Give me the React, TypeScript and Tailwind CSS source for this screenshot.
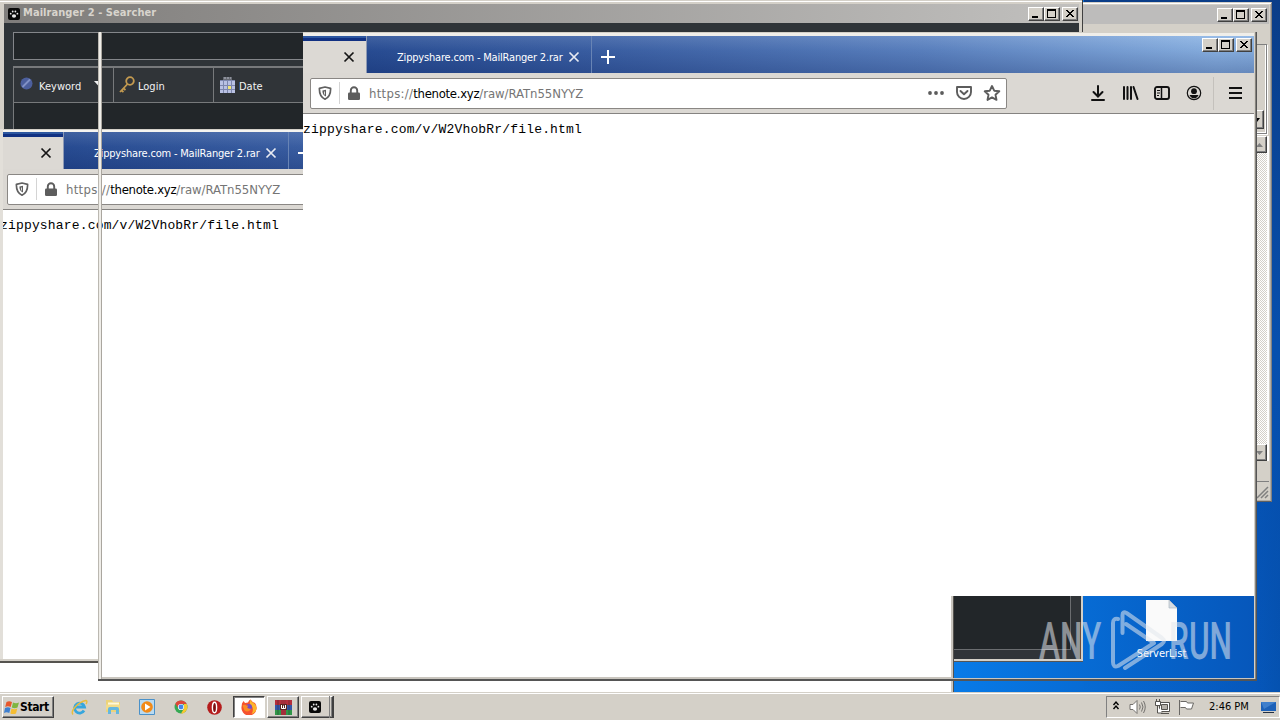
import type { ReactNode } from "react";

const ui = "font-['DejaVu_Sans_Condensed','DejaVu_Sans',sans-serif] whitespace-nowrap";

function WinButton({ kind }: { kind: "min" | "max" | "close" }) {
  return (
    <div
      className={`flex h-[14px] w-4 shrink-0 items-center justify-center border border-t-white border-l-white border-r-[#404040] border-b-[#404040] bg-[#d4d0c8] shadow-[inset_-1px_-1px_0_#808080] ${kind === "close" ? "ml-[2px]" : ""}`}
    >
      <svg width="14" height="12" viewBox="0 0 14 12" fill="none" stroke="#000" shapeRendering="crispEdges">
        {kind === "min" && <path d="M3 9h6" strokeWidth="2" />}
        {kind === "max" && <path d="M2.500 1.500h8v8h-8zM2 2.500h9" />}
        {kind === "close" && <path d="M3 2l7 7M4 2l7 7M10 2L3 9M11 2L4 9" shapeRendering="auto" />}
      </svg>
    </div>
  );
}

function WinButtons() {
  return (
    <div className="flex">
      <WinButton kind="min" />
      <WinButton kind="max" />
      <WinButton kind="close" />
    </div>
  );
}

function Paw({ className = "" }: { className?: string }) {
  return (
    <svg width="12" height="12" viewBox="0 0 12 12" className={className}>
      <rect width="12" height="12" rx="2" fill="#080808" />
      <g fill="#e8e8e8">
        <ellipse cx="6" cy="8" rx="2.100" ry="1.700" />
        <circle cx="2.700" cy="5.700" r=".9" />
        <circle cx="4.700" cy="3.500" r=".9" />
        <circle cx="7.400" cy="3.500" r=".9" />
        <circle cx="9.400" cy="5.700" r=".9" />
      </g>
    </svg>
  );
}

function ScrollButton({ up = false }: { up?: boolean }) {
  return (
    <div className="flex h-[17px] w-[15px] items-center justify-center border border-t-white border-l-white border-r-[#404040] border-b-[#404040] bg-[#d4d0c8] shadow-[inset_-1px_-1px_0_#808080]">
      <svg width="7" height="4" viewBox="0 0 7 4" className={up ? "" : "rotate-180"}>
        <path d="M0 4L3.500 0L7 4z" fill="#808080" />
      </svg>
    </div>
  );
}

function BackWindow() {
  return (
    <div className="absolute top-[2px] left-[900px] flex h-[500px] w-[372px] flex-col border border-t-[#d4d0c8] border-l-[#d4d0c8] border-r-[#808080] border-b-[#606060] bg-[#d4d0c8] p-[2px] shadow-[inset_1px_1px_0_#fff,inset_-1px_-1px_0_#b0aca5]">
      <div className="flex h-[19px] shrink-0 items-center justify-end bg-[#bdbcbb] pr-[2px]">
        <WinButtons />
      </div>
      <div className="mt-[20px] h-[90px] w-[364px] shrink-0 border border-[#808080] shadow-[1px_1px_0_#fff,inset_-1px_-1px_0_#fff]">
        <div className="flex h-full items-end justify-end pr-[2px] pb-[4px]">
          <div className="flex h-[19px] w-2 items-center border border-l-0 border-t-white border-r-[#404040] border-b-[#404040] shadow-[inset_-1px_-1px_0_#808080]">
            <svg width="4" height="4"><path d="M0 0h4L1 4z" /></svg>
          </div>
        </div>
      </div>
      <div className="mt-[2px] flex h-[325px] w-[366px] flex-col items-end justify-between border-r-2 border-white bg-[#ebe9e4] bg-[repeating-conic-gradient(#d4d0c8_0_25%,#fff_0_50%)] bg-[length:2px_2px]">
        <ScrollButton up />
        <ScrollButton />
      </div>
      <div className="mt-[20px] flex flex-1 justify-end border-t border-[#808080] pt-1">
        <svg width="13" height="13" viewBox="0 0 13 13" stroke="#808080" strokeWidth="1.500">
          <path d="M1 12L12 1M5 12l7-7M9 12l3-3" />
        </svg>
      </div>
    </div>
  );
}

function MailCell({
  label,
  icon,
  width,
  pad,
  caret = false,
}: {
  label: string;
  icon: ReactNode;
  width: string;
  pad: string;
  caret?: boolean;
}) {
  return (
    <div className={`flex shrink-0 items-center border-r border-[#77797b] ${width} ${pad}`}>
      {icon}
      <span className={`${ui} pt-[4px] text-[11px] text-[#f2f2f2]`}>{label}</span>
      {caret && (
        <svg width="5" height="5" viewBox="0 0 5 5" className="mb-[4px] ml-[13px]">
          <path d="M0 0h9L4.500 5z" fill="#f0f0f0" />
        </svg>
      )}
    </div>
  );
}

function MailWindow() {
  return (
    <div className="absolute top-0 left-0 flex h-[132px] w-[1083px] flex-col overflow-hidden border-r border-[#404040] bg-[#d4d0c8] pt-1 pr-[3px] pl-1 shadow-[inset_0_1px_0_#d4d0c8,inset_0_2px_0_#fff]">
      <div className="flex h-[19px] shrink-0 items-center bg-linear-to-r from-[#7f7d7b] to-[#c1c0be] pr-px pl-[4px]">
        <Paw />
        <span className={`${ui} ml-[3px] flex-1 text-[11px] font-bold tracking-[0.06px] text-[#d8d4cd]`}>Mailranger 2 - Searcher</span>
        <WinButtons />
      </div>
      <div className="flex flex-1 flex-col bg-[#2f3438] pt-[9px] pl-[9px]">
        <div className="h-[28px] shrink-0 border border-[#84868a] bg-[#222629]" />
        <div className="mt-[6px] flex h-[37px] shrink-0 border border-t-2 border-[#77797b] bg-[#303438]">
          <MailCell
            label="Keyword"
            width="w-[100px]"
            pad="pl-[6px]"
            caret
            icon={
              <svg width="13" height="13" viewBox="0 0 13 13" className="mr-[6px] -mt-1 shrink-0">
                <circle cx="6.500" cy="6.500" r="6" fill="#4c5f9d" />
                <path d="M2.500 10L10 2.500" stroke="#8292c6" strokeWidth="1.800" />
              </svg>
            }
          />
          <MailCell
            label="Login"
            width="w-[100px]"
            pad="pl-1"
            icon={
              <svg width="18" height="18" viewBox="0 0 18 18" fill="none" stroke="#c39a50" strokeWidth="1.800" className="mr-[2px]">
                <circle cx="12" cy="5" r="3.800" />
                <path d="M9.500 8L2 16M5 12l2.500 2M3 14l2.500 2" />
              </svg>
            }
          />
          <MailCell
            label="Date"
            width="w-[600px]"
            pad="pl-[5px]"
            icon={
              <svg width="17" height="18" viewBox="0 0 17 18" className="mr-[3px]">
                <path d="M4 1h9v4H4z" fill="#666a72" />
                <path d="M5 2h7" stroke="#b5b8c4" strokeDasharray="2 1" />
                <path d="M1 4h15v13H1z" fill="#b9c1e3" />
                <path d="M1 4.500h15M1 9.500h15M1 13.500h15M4.500 4v13M8.500 4v13M12.500 4v13" stroke="#7d87ad" />
                <path d="M9 10h3v3H9z" fill="#f1e575" />
              </svg>
            }
          />
        </div>
        <div className="flex-1 border-l border-[#77797b] bg-[#222629]" />
      </div>
    </div>
  );
}

function Cross({ color, className = "" }: { color: string; className?: string }) {
  return (
    <svg width="12" height="12" viewBox="0 0 12 12" stroke={color} strokeWidth="1.700" className={`shrink-0 ${className}`}>
      <path d="M1.500 1.500l9 9M10.500 1.500l-9 9" />
    </svg>
  );
}

function Shield() {
  return (
    <svg width="14" height="14" viewBox="0 0 14 14" fill="none" stroke="#606060" strokeWidth="1.700" className="shrink-0">
      <path d="M7 1L12.600 2.300C12.800 8 11.500 11.300 7 13.200C2.500 11.300 1.200 8 1.400 2.300Z" strokeLinejoin="round" />
      <path d="M8 3.800v6.600C5.200 9.300 4.400 7.500 4.400 4.500z" fill="#606060" stroke="none" />
      <path d="M6.500 5.500v3" stroke="#fff" strokeWidth=".8" />
    </svg>
  );
}

function Lock() {
  return (
    <svg width="14" height="15" viewBox="0 0 14 15" className="shrink-0">
      <rect x="1" y="6.500" width="12" height="7.500" rx="1.300" fill="#5d5d5d" />
      <path d="M3.800 7V4.500a3.200 3.200 0 0 1 6.400 0V7" fill="none" stroke="#5d5d5d" strokeWidth="1.900" />
    </svg>
  );
}

function BrowserChrome({ full = false }: { full?: boolean }) {
  return (
    <div className="flex w-[951px] shrink-0 flex-col">
      <div className="flex h-[37px] bg-[linear-gradient(to_bottom,rgba(255,255,255,.1),rgba(0,20,80,.06)_40%,rgba(0,20,80,.26)),linear-gradient(to_right,#234890_0%,#2d5298_10%,#3d62a6_32%,#5d84c2_65%,#8cb4e4_96%,#8ab2e2_100%)]">
        <div className="flex w-[64px] shrink-0 flex-col border-r border-[#8e9ab4]">
          <div className="h-[5px] border-t-2 border-[#2d57a0] bg-[#113182]" />
          <div className="flex flex-1 items-center bg-[#dcd9d4] pl-10">
            <Cross color="#151515" />
          </div>
        </div>
        <div className="flex w-[225px] shrink-0 items-center border-r border-[#6884b5] pt-[5px] pl-[30px]">
          <span className={`${ui} w-[171px] pt-[2px] text-[11px] tracking-[-0.19px] text-white`}>Zippyshare.com - MailRanger 2.rar</span>
          <Cross color="#e8ebf2" />
        </div>
        <div className="flex flex-1 items-center pt-[3px] pl-[8px]">
          <svg width="15" height="15" viewBox="0 0 15 15" stroke="#fff" strokeWidth="2" shapeRendering="crispEdges">
            <path d="M8 1v14M1 8h14" />
          </svg>
        </div>
        {full && (
          <div className="pt-[2px] pr-[2px]">
            <WinButtons />
          </div>
        )}
      </div>
      <div className="flex h-[41px] items-center border-b border-[#858381] bg-[#dbd8d3] pl-[7px]">
        <div className="flex h-[31px] w-[697px] items-center rounded-[2px] border border-[#8a8784] bg-white pl-[7px]">
          <Shield />
          <div className="ml-[7px] h-[22px] w-px bg-[#d4d4d4]" />
          <div className="ml-[7px] flex"><Lock /></div>
          <span className={`${ui} ml-[8px] flex-1 pt-px text-[13px] tracking-[-0.04px] text-[#757575]`}>
            <span className="tracking-[0.3px]">https://</span>
            <span className="tracking-[-0.3px] text-black">thenote.xyz</span>/raw/RATn55NYYZ
          </span>
          <svg width="74" height="18" viewBox="0 0 74 18" fill="none" stroke="#5c5c5c" strokeWidth="1.900" className="mr-[5px]">
            <g fill="#5c5c5c" stroke="none">
              <circle cx="3" cy="9" r="1.900" /><circle cx="9" cy="9" r="1.900" /><circle cx="15" cy="9" r="1.900" />
            </g>
            <path d="M30 3h14v5a7 7 0 0 1-14 0zM33.500 7l3.500 3.300L40.500 7" strokeLinejoin="round" strokeLinecap="round" />
            <path d="M65 2l2.200 4.700 5.100.6-3.800 3.500 1 5.100L65 13.400l-4.500 2.500 1-5.100-3.800-3.500 5.100-.6z" strokeLinejoin="round" />
          </svg>
        </div>
        {full && (
          <div className="ml-[83px] flex h-full items-center">
            <svg width="16" height="16" viewBox="0 0 16 16" fill="none" stroke="#111" strokeWidth="2" strokeLinecap="round">
              <path d="M8 1v10M3.500 7L8 11.500 12.500 7M2 15h12" />
            </svg>
            <svg width="17" height="16" viewBox="0 0 17 16" stroke="#111" strokeWidth="2" strokeLinecap="round" className="ml-4">
              <path d="M2 2v12M5.500 2v12M9 2v12M11.500 2l4 12" />
            </svg>
            <svg width="16" height="14" viewBox="0 0 16 14" fill="none" stroke="#111" strokeWidth="1.900" className="ml-[15px]">
              <rect x="1" y="1" width="14" height="12" rx="2" />
              <path d="M7.500 1v12" strokeWidth="1.500" />
              <path d="M3 4.500h3M3 7h3M3 9.500h2" strokeWidth="1" />
            </svg>
            <svg width="16" height="16" viewBox="0 0 16 16" fill="none" stroke="#111" className="ml-4">
              <circle cx="8" cy="8" r="6.700" strokeWidth="1.200" />
              <circle cx="8" cy="6.200" r="2.900" fill="#111" stroke="none" />
              <path d="M3.500 10h9C11.500 12.500 10 13.300 8 13.300s-3.500-.8-4.500-3.300z" fill="#111" stroke="none" />
            </svg>
            <div className="ml-[11px] h-[33px] w-px bg-[#c4c1bc]" />
            <svg width="13" height="14" viewBox="0 0 13 14" stroke="#111" strokeWidth="2" className="ml-[15px]">
              <path d="M0 2h13M0 7h13M0 12h13" />
            </svg>
          </div>
        )}
      </div>
      <div className="flex-1 bg-white pt-[8px]">
        <span className="block font-['Liberation_Mono',monospace] text-[13px] leading-[16px] tracking-[0.17px] whitespace-nowrap text-black">
          zippyshare.com/v/W2VhobRr/file.html
        </span>
      </div>
    </div>
  );
}

function TrailWindow() {
  return (
    <div className="absolute top-[129px] left-0 flex h-[534px] w-[303px] flex-col overflow-hidden bg-white">
      <div className="flex min-h-0 flex-1">
        <div className="w-1 shrink-0 border-r border-[#b5b1ab] bg-[#e2dfd9]" />
        <div className="-ml-px flex w-[300px] shrink-0 flex-col overflow-hidden">
          <div className="h-[3px] shrink-0 border-t border-[#d4d0c8] bg-[#f5f4f0]" />
          <div className="-ml-[3px] flex min-h-0 w-[303px] flex-1 overflow-hidden"><BrowserChrome /></div>
        </div>
      </div>
      <div className="h-1 w-[98px] shrink-0 border-b-2 border-[#55534f] bg-[#d4d0c8]" />
    </div>
  );
}

function MainWindow() {
  return (
    <div className="absolute top-[32px] left-[98px] flex h-[649px] w-[1159px] border-r border-b-2 border-[#555]">
      <div className="w-[4px] shrink-0 border-x border-l-[#bbb8b1] border-r-[#aaa69f] bg-[#efede8]" />
      <div className="w-[201px] shrink-0 border-b-2 border-[#c9c5be]" />
      <div className="flex w-[951px] shrink-0 flex-col border-b-2 border-[#c9c5be]">
        <div className="h-1 shrink-0 border-t border-[#d4d0c8] bg-[#f0eee9]" />
        <div className="flex flex-1"><BrowserChrome full /></div>
      </div>
      <div className="flex-1 border-r border-[#88857f] bg-[#d4d0c8]" />
    </div>
  );
}

function ExposedDesktop() {
  return (
    <div className="absolute top-[596px] left-[951px] flex h-[82px] w-[303px] bg-linear-to-r from-[#087be8] to-[#0657bb]">
      <div className="w-[3px] shrink-0 border-r border-[#55534f] bg-[#c9c5be]" />
      <div className="h-[65px] w-[129px] border-r-2 border-b-2 border-r-[#d4d0c8] border-b-[#d4d0c8] bg-[#303438] shadow-[0_1px_0_#555]">
        <div className="h-[54px] w-[117px] border-r border-b border-[#6b6d70] bg-[#222629]" />
      </div>
      <div className="flex w-[157px] flex-col items-center pt-1">
        <svg width="31" height="41" viewBox="0 0 31 41">
          <path d="M0 0h23l8 8v33H0z" fill="#fafafa" />
          <path d="M23 0v8h8z" fill="#d6dce2" stroke="#aeb8c2" strokeWidth=".7" />
        </svg>
        <span className={`${ui} mt-[5px] text-[11px] text-white`}>ServerList</span>
      </div>
    </div>
  );
}

function Watermark() {
  return (
    <div className="absolute top-[606px] left-[1039px] flex h-[68px] w-[195px] text-[#e4e8ee] opacity-55">
      <div className="w-[70px] pt-[8px]">
        <span className="inline-block origin-left scale-x-[0.62] font-['Roboto',sans-serif] text-[51px] leading-[56px] font-medium">ANY</span>
      </div>
      <svg width="58" height="68" viewBox="0 0 58 68" fill="none" stroke="currentColor" strokeWidth="4" strokeLinejoin="round" strokeLinecap="round" className="shrink-0">
        <path d="M13.500 27V9q0-4 4-2L53 32q4 3 0 6L16 62M9 13q-5-1-5 4v39q0 6 5 4L45 37 17 18" />
      </svg>
      <div className="w-[66px] pt-[8px] pl-[2px]">
        <span className="inline-block origin-left scale-x-[0.62] font-['Roboto',sans-serif] text-[51px] leading-[56px] font-medium">RUN</span>
      </div>
    </div>
  );
}

function TaskSlot({ children, state = "flat" }: { children: ReactNode; state?: "flat" | "raised" | "pressed" }) {
  const look =
    state === "raised"
      ? "border-t-white border-l-white border-r-[#404040] border-b-[#404040] shadow-[inset_-1px_-1px_0_#808080]"
      : state === "pressed"
        ? "border-t-[#404040] border-l-[#404040] border-r-white border-b-white bg-white shadow-[inset_1px_1px_0_#808080]"
        : "border-transparent";
  return <div className={`flex h-[22px] w-8 shrink-0 items-center justify-center border ${look}`}>{children}</div>;
}

function Taskbar() {
  return (
    <div className="absolute top-[692px] left-0 flex h-7 w-[1280px] items-center border-t border-[#d4d0c8] bg-[#d4d0c8] pt-px pl-[2px] shadow-[inset_0_1px_0_#fff,0_1px_0_#d4d0c8]">
      <div className="flex h-[22px] w-[52px] shrink-0 items-center border border-t-white border-l-white border-r-[#404040] border-b-[#404040] pl-px shadow-[inset_-1px_-1px_0_#808080]">
        <svg width="16" height="15" viewBox="0 0 16 15">
          <path d="M2.500 2Q5 .3 8 2L6.700 7Q4 5.500 1.200 7z" fill="#e8582c" />
          <path d="M9 2.500q3 1.500 6 0L13.500 7.500q-3 1.500-5.700 0z" fill="#7fb541" />
          <path d="M1 8q3-1.500 5.500 0L5.300 13Q2.500 11.500 0 13z" fill="#3f80d0" />
          <path d="M7.500 8.500q3 1.500 5.800 0L12 13.500q-3 1.200-5.700 0z" fill="#f5bd32" />
        </svg>
        <span className={`${ui} text-[12px] font-bold tracking-[-0.4px] text-black`}>Start</span>
      </div>
      <div className="ml-[9px] flex gap-[2px]">
        <TaskSlot>
          <svg width="17" height="17" viewBox="0 0 17 17" fill="none">
            <path d="M13 11.500A5 5 0 1 1 13.500 8H4" stroke="#36a6dd" strokeWidth="2.800" />
            <path d="M2 15.500C-1 12 7 3 15 1.500c2 .5 0 3.500 0 3.500" stroke="#e9bd3c" strokeWidth="1.400" />
          </svg>
        </TaskSlot>
        <TaskSlot>
          <svg width="17" height="16" viewBox="0 0 17 16">
            <path d="M1 1h6l1 2h7v10H1z" fill="#ecd37a" />
            <path d="M3 3.500h11v6H3z" fill="#fff8d8" />
            <path d="M1 5.500h14v5H1z" fill="#f2dc8b" />
            <path d="M3 15v-5q0-2 2-2h7q2 0 2 2v5h-3v-4H6v4z" fill="#65b7df" />
          </svg>
        </TaskSlot>
        <TaskSlot>
          <svg width="16" height="16" viewBox="0 0 16 16">
            <path d="M.5.5h15v15H.5z" fill="#b9daf1" stroke="#4a91c9" />
            <circle cx="8" cy="8" r="5.800" fill="#f28a18" />
            <path d="M6 4.500v7l5.500-3.500z" fill="#fff" />
          </svg>
        </TaskSlot>
        <TaskSlot>
          <svg width="14" height="14" viewBox="0 0 14 14" className="-ml-px">
            <circle cx="7" cy="7" r="6.500" fill="#35a853" />
            <path d="M1.300 3.800A6.500 6.500 0 0 1 12.700 4H7L4.500 8.500z" fill="#dd4539" />
            <path d="M12.700 4A6.500 6.500 0 0 1 7 13.500L10 8.500V4z" fill="#f8c82f" />
            <circle cx="7" cy="7" r="3.100" fill="#fff" />
            <circle cx="7" cy="7" r="2.400" fill="#4385e8" />
          </svg>
        </TaskSlot>
        <TaskSlot>
          <svg width="15" height="15" viewBox="0 0 15 15" className="-ml-[2px]">
            <circle cx="7.500" cy="7.500" r="7.300" fill="#b51c1c" />
            <ellipse cx="7.500" cy="7.500" rx="2.100" ry="5.200" fill="#7d1010" stroke="#fff" strokeWidth="1.400" />
          </svg>
        </TaskSlot>
        <TaskSlot state="pressed">
          <svg width="16" height="16" viewBox="0 0 16 16">
            <path d="M1 4.500L2.500 2 4 4l3-.5Q8 1 9.500.5q2 3 4.500 3.500 2 2.500 1.500 6A7.500 7.500 0 0 1 .5 8z" fill="#f6532f" />
            <path d="M9.500.5q.5 2 3 3.500 3.500 2 3 6-.8 4-5 5Q14 9 9 5.500 8.500 2 9.500.5z" fill="#fdb52a" />
            <circle cx="8" cy="8" r="3" fill="#754bc5" />
            <path d="M1.500 6.500q2.500-1.500 4 0l2 .3Q6.500 8 6 8q1 2.500 4.500 1.500-3 4.500-7 2z" fill="#fb8c25" />
          </svg>
        </TaskSlot>
        <TaskSlot state="raised">
          <svg width="17" height="15" viewBox="0 0 17 15">
            <path d="M0 0h17v5H0z" fill="#b52d3c" /><path d="M0 5h17v5H0z" fill="#3656a8" /><path d="M0 10h17v5H0z" fill="#2f9648" />
            <path d="M6 0h5v15H6z" fill="#a32d3a" /><path d="M3 0v15M14 0v15" stroke="#222" opacity=".4" />
            <path d="M5 4h7v6H5z" fill="#5a2320" /><path d="M6.500 5v3.500h4V5M8.500 5.500v3" fill="none" stroke="#fff" />
          </svg>
        </TaskSlot>
        <div className="flex">
          <TaskSlot state="raised"><div className="-ml-1"><Paw /></div></TaskSlot>
          <div className="-ml-1 h-[22px] border-r border-[#808080]" />
          <div className="ml-[1px] h-[22px] w-[3px] border-r border-[#404040]" />
        </div>
      </div>
      <div className="ml-auto flex h-[22px] w-[174px] items-center border border-t-[#808080] border-l-[#808080] border-r-white border-b-white pl-[5px]">
        <svg width="8" height="12" viewBox="0 0 8 12" fill="none" stroke="#000" strokeWidth="1.400" className="-mt-[3px] shrink-0">
          <path d="M1.500 5l2.500-3 2.500 3M1.500 9l2.500-3 2.500 3" />
        </svg>
        <svg width="17" height="14" viewBox="0 0 17 14" fill="none" stroke="#74726f" className="ml-[9px] shrink-0">
          <path d="M1 4.500h3l4-4v13l-4-4H1z" fill="#fff" />
          <path d="M10.500 4.500q1.500 2.500 0 5M12.500 2.500q3 4.500 0 9M14.500 1q3.500 6 0 12" />
        </svg>
        <svg width="17" height="16" viewBox="0 0 17 16" fill="#fff" stroke="#55534f" className="ml-[8px] shrink-0">
          <path d="M5.500 3.500h10v9h-10zM7 14.500h8" />
          <path d="M7.500 5.500h6v5h-6z" fill="#b5b1aa" />
          <path d="M1.500 2.500h5v4h-5zM2.500 0v2M5.500 0v2M3.500 7v7h5" />
        </svg>
        <svg width="17" height="15" viewBox="0 0 17 15" fill="#fff" stroke="#6a6865" className="ml-[7px] shrink-0">
          <path d="M2.500 1.500h6l1 1.500h6l-2 6h-5L7.500 7.500h-5M1.500 0v15" />
        </svg>
        <span className={`${ui} ml-[14px] text-[11px] text-black`}>2:46 PM</span>
        <svg width="16" height="13" viewBox="0 0 16 13" className="ml-auto mr-[2px]">
          <path d="M0 1h15v9H0z" fill="#1d61b8" /><path d="M0 1h15L3 8z" fill="#3f7fcc" /><path d="M2 11h11v1H2z" fill="#222f43" />
        </svg>
      </div>
    </div>
  );
}

export default function App() {
  return (
    <div className="relative h-[720px] w-[1280px] overflow-hidden bg-[#d4d0c8]">
      <div className="absolute top-0 left-0 h-[692px] w-[1280px] bg-[linear-gradient(to_right,#087be8_74%,#0657bb_98%,#0552b0_100%)]" />
      <div className="absolute top-0 left-[1084px] h-[692px] w-[196px] bg-linear-to-b from-[#0a3d88] via-[#064fae] to-[#0660c8]/0" />
      <BackWindow />
      <div className="absolute top-[129px] left-0 h-[563px] w-[951px] bg-white" />
      <MailWindow />
      <TrailWindow />
      <MainWindow />
      <ExposedDesktop />
      <div className="absolute top-[681px] left-[951px] h-[11px] w-[3px] border-r border-[#55534f] bg-[#c9c5be]" />
      <Watermark />
      <Taskbar />
    </div>
  );
}
